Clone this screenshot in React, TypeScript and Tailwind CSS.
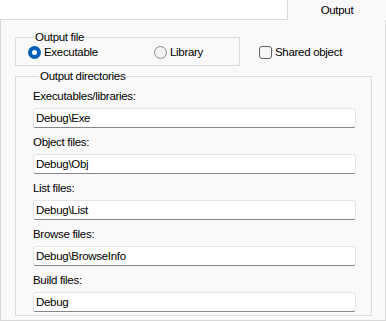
import React from "react"

const font = { fontFamily: "'Liberation Sans', Arial, sans-serif" }

const dirs = [
  { label: "Executables/libraries:", value: "Debug\\Exe" },
  { label: "Object files:", value: "Debug\\Obj" },
  { label: "List files:", value: "Debug\\List" },
  { label: "Browse files:", value: "Debug\\BrowseInfo" },
  { label: "Build files:", value: "Debug" },
]

function Radio({ checked, label }: { checked?: boolean; label: string }) {
  return (
    <label className="flex items-center gap-[3px]">
      {checked ? (
        <span className="w-[13px] h-[13px] rounded-full bg-[#005fb8] flex items-center justify-center">
          <span className="w-[5px] h-[5px] rounded-full bg-white" />
        </span>
      ) : (
        <span className="w-[13px] h-[13px] rounded-full border border-[#8a8a8a] bg-[#f3f3f3]" />
      )}
      <span>{label}</span>
    </label>
  )
}

export default function App() {
  return (
    <div className="w-[386px] h-[321px] bg-white flex flex-col text-[11.5px] tracking-[-0.3px] leading-[16px] text-black" style={font}>
      {/* tab strip */}
      <div className="h-[20px] flex">
        <div className="flex-1 border-b border-[#d9d9d9]" />
        <div className="w-[99px] bg-[#f9f9f9] border-l border-[#d9d9d9] flex items-center justify-center">Output</div>
      </div>

      {/* page */}
      <div className="flex-1 bg-[#f9f9f9] border-l border-r border-b border-[#d9d9d9] pl-[14px] pr-[13px] pt-[9px]">
        <div className="flex items-start gap-[19px]">
          <fieldset className="w-[225px] border border-[#dcdcdc] pl-[12px] pb-[6px]">
            <legend className="ml-[6px] px-[1px]">Output file</legend>
            <div className="h-[14px] flex items-center">
              <div className="w-[126px]"><Radio checked label="Executable" /></div>
              <Radio label="Library" />
            </div>
          </fieldset>
          <label className="mt-[16px] h-[14px] flex items-center gap-[3px]">
            <span className="w-[13px] h-[13px] rounded-[3px] border border-[#616161] bg-[#f6f6f6]" />
            <span>Shared object</span>
          </label>
        </div>

        <fieldset className="mt-[2px] w-[357px] border border-[#dcdcdc] pl-[17px] pr-[15px] pt-[4px] pb-[3px]">
          <legend className="ml-[6px] px-[1px]">Output directories</legend>
          <div className="flex flex-col gap-[6px]">
            {dirs.map(d => (
              <div key={d.label} className="flex flex-col gap-[4px]">
                <span>{d.label}</span>
                <input readOnly value={d.value}
                  className="h-[20px] w-full bg-white border border-[#e5e5e5] border-b-[#868686] rounded-[3px] px-[2px] text-[11.5px] tracking-[-0.3px] outline-none" style={font} />
              </div>
            ))}
          </div>
        </fieldset>
      </div>
    </div>
  )
}
